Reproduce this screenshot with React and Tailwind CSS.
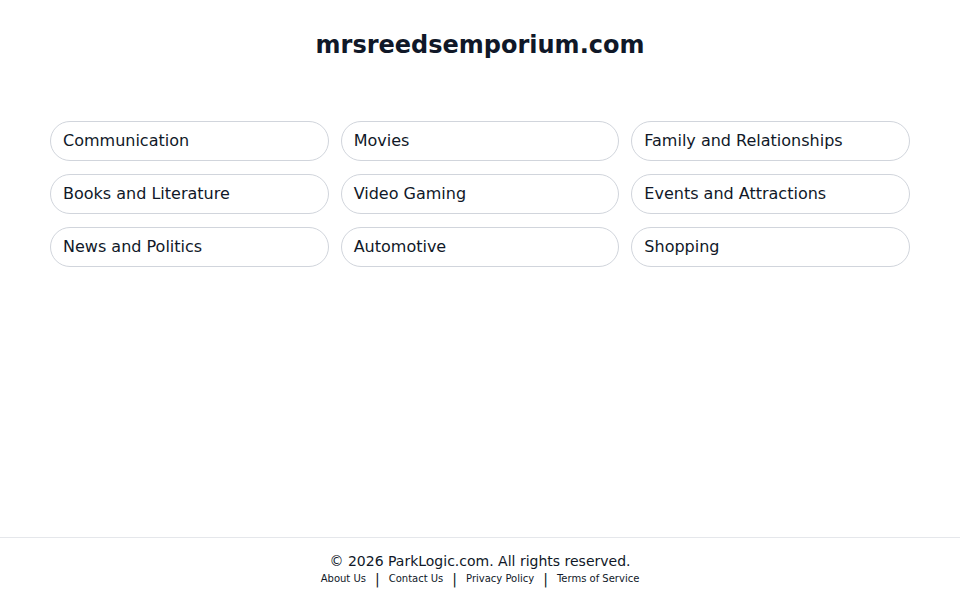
import React from 'react';

const categories = [
  'Communication',
  'Movies',
  'Family and Relationships',
  'Books and Literature',
  'Video Gaming',
  'Events and Attractions',
  'News and Politics',
  'Automotive',
  'Shopping',
];

const links = ['About Us', 'Contact Us', 'Privacy Policy', 'Terms of Service'];

export default function App() {
  return (
    <div className="min-h-screen flex flex-col bg-white text-gray-900" style={{ fontFamily: '"DejaVu Sans", sans-serif' }}>
      <main className="flex-1">
        {/* HEADER */}
        <h1 className="pt-[29px] text-center text-2xl leading-8 font-bold text-gray-900">mrsreedsemporium.com</h1>

        {/* CATEGORIES */}
        <div className="mx-[50px] mt-[60px] grid grid-cols-3 gap-x-3 gap-y-[13px]">
          {categories.map((c) => (
            <a
              key={c}
              href="#"
              className="h-10 flex items-center px-[12px] rounded-full border border-gray-300 text-base text-gray-900"
            >
              {c}
            </a>
          ))}
        </div>
      </main>

      {/* FOOTER */}
      <footer className="border-t border-gray-200 pt-[13px] pb-[13px] text-center">
        <p className="text-sm leading-5 text-gray-900">© 2026 ParkLogic.com. All rights reserved.</p>
        <div className="flex items-center justify-center gap-[9px] text-[10px] leading-4 text-gray-900">
          {links.map((l, i) => (
            <React.Fragment key={l}>
              {i > 0 && <span className="text-sm leading-4">|</span>}
              <a href="#">{l}</a>
            </React.Fragment>
          ))}
        </div>
      </footer>
    </div>
  );
}
